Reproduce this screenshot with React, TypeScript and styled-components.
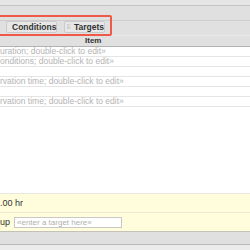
import React from 'react'
import styled, { createGlobalStyle } from 'styled-components'

const GlobalStyle = createGlobalStyle`
  html, body {
    margin: 0;
    padding: 0;
    background: #ffffff;
  }
  body {
    width: 250px;
    height: 250px;
    overflow: hidden;
    font-family: 'Liberation Sans', Arial, sans-serif;
  }
`

const Window = styled.div`
  position: relative;
  display: flex;
  flex-direction: column;
  width: 250px;
  height: 250px;
  overflow: hidden;
  background: #ffffff;
`

const TopStrip = styled.div`
  height: 5px;
  background: #e6e6e6;
  border-bottom: 1px solid #c4c4c4;
`

const Toolbar = styled.div`
  height: 14px;
  background: #e0e0e0;
  border-bottom: 1px solid #cdcdcd;
`

const TabBar = styled.div`
  display: flex;
  align-items: flex-start;
  gap: 7px;
  height: 14px;
  padding-left: 6px;
  background: #e0e0e0;
  border-bottom: 1px solid #e9e9e9;
`

const TabButton = styled.div<{ $width: number }>`
  display: flex;
  align-items: center;
  gap: 3px;
  box-sizing: border-box;
  width: ${(p) => p.$width}px;
  height: 12px;
  padding-left: 2px;
  background: #e7e7e7;
  border: 1px solid #cbcbcb;
  border-radius: 2px;
  font-size: 8.5px;
  font-weight: bold;
  color: #333333;
`

const Highlight = styled.div`
  position: absolute;
  left: -3px;
  top: 15px;
  width: 111px;
  height: 17px;
  border: 2px solid #ee5a47;
  border-radius: 2px;
  pointer-events: none;
`

const HeaderRow = styled.div`
  height: 10px;
  background: #e0e0e0;
  border-bottom: 1px solid #b2b2b2;
  font-size: 8px;
  font-weight: bold;
  line-height: 10px;
  color: #333333;
  padding-left: 85px;
`

const Row = styled.div`
  height: 9px;
  border-bottom: 1px solid #e5e5e5;
  font-size: 8.5px;
  line-height: 9px;
  color: #b4b4b4;
  white-space: nowrap;
`

const Blank = styled.div`
  flex: 1;
`

const InfoRow = styled.div<{ $last?: boolean }>`
  display: flex;
  align-items: center;
  gap: 4px;
  height: 18px;
  background: #fffddc;
  border-top: 1px solid ${(p) => (p.$last ? '#ebe9cf' : '#e8e8e0')};
  border-bottom: ${(p) => (p.$last ? '1px solid #c2c2b8' : 'none')};
  font-size: 9px;
  color: #333333;
`

const TargetInput = styled.div`
  box-sizing: border-box;
  width: 108px;
  height: 11px;
  padding-left: 2px;
  background: #ffffff;
  border: 1px solid #c8c8c8;
  font-size: 8px;
  line-height: 9px;
  color: #b0b0b0;
`

const StatusBar = styled.div`
  height: 12px;
  background: #e0e0e0;
  border-bottom: 1px solid #b8b8b8;
`

const BottomStrip = styled.div`
  flex: 0 0 auto;
  height: 5px;
  background: #ececec;
`

const Grip: React.FC = () => (
  <svg width="6" height="8" viewBox="0 0 6 8">
    {[0, 2, 4].map((x) =>
      [0, 2, 4, 6].map((y) => (
        <rect key={`${x}-${y}`} x={x} y={y} width="1" height="1" fill="#a8a8a8" />
      ))
    )}
  </svg>
)

const rows = [
  'uration; double-click to edit»',
  'onditions; double-click to edit»',
  '',
  'rvation time; double-click to edit»',
  '',
  'rvation time; double-click to edit»',
]

const App: React.FC = () => {
  return (
    <Window>
      <GlobalStyle />
      <TopStrip />
      <Toolbar />
      <TabBar>
        <TabButton $width={51}>
          <Grip />
          Conditions
        </TabButton>
        <TabButton $width={41}>
          <Grip />
          Targets
        </TabButton>
      </TabBar>
      <HeaderRow>Item</HeaderRow>
      {rows.map((text, i) => (
        <Row key={i}>{text}</Row>
      ))}
      <Blank />
      <InfoRow>.00 hr</InfoRow>
      <InfoRow $last>
        up
        <TargetInput>«enter a target here»</TargetInput>
      </InfoRow>
      <StatusBar />
      <BottomStrip />
      <Highlight />
    </Window>
  )
}

export default App
